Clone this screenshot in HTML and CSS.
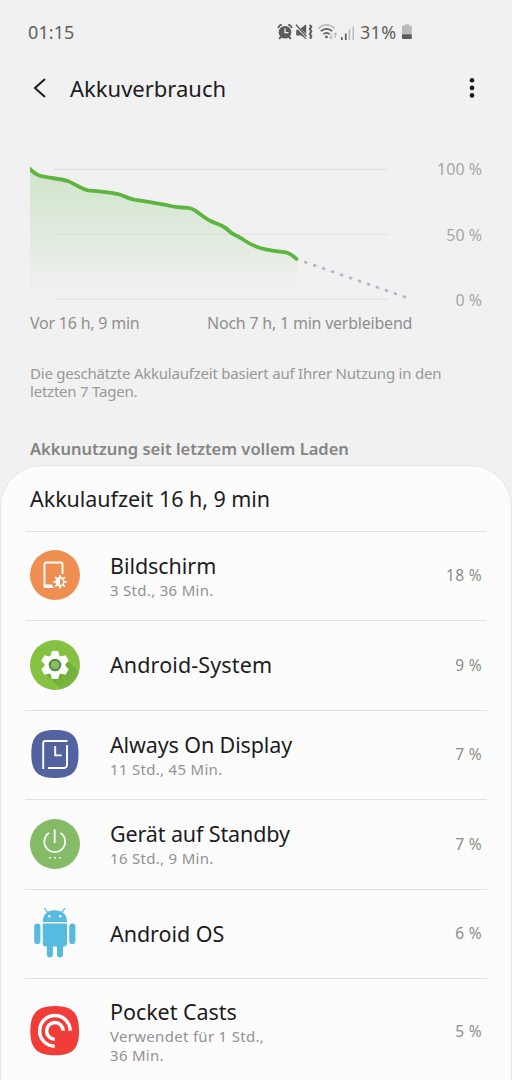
FILE: index.html
```html
<!DOCTYPE html>
<html lang="de">
<head>
<meta charset="utf-8">
<title>Akkuverbrauch</title>
<link rel="stylesheet" href="styles.css">
</head>
<body>
<div class="screen">
  <header class="status">
    <span class="clock">01:15</span>
    <svg class="status-icons" width="80" height="20" viewBox="0 0 80 20">
      <g fill="none" stroke="#5c5c5c">
        <circle cx="8" cy="10.300" r="6.300" fill="#5c5c5c" stroke="none"/>
        <path d="M1.200 6.200Q1.800 3.200 4.800 2.600M11.200 2.600Q14.200 3.200 14.800 6.200" stroke-width="1.700"/>
        <path d="M4.200 14.300L2.200 17M11.800 14.300l2 2.700" stroke-width="2"/>
        <path d="M8 6.500v4.200h3.500" stroke="#f1f1f1" stroke-width="1.300"/>
        <path d="M19.200 7.800h2l8 8.400v1.200l-5-4h-5zM23.500 6.500l5.700-4.300v10z" fill="#5c5c5c" stroke="none"/>
        <path d="M19 2.700L29.500 14.500" stroke-width="1.400"/>
        <path d="M32.800 2.800l1.500 1.900-1.500 2.400 1.500 2.400-1.500 2.400 1.500 2.400-1.200 2.400" stroke-width="2"/>
        <path d="M41.300 6.600Q49.500-.8 57.700 6.600" stroke="#bbb" stroke-width="1.500"/>
        <path d="M43.800 9.200q5.700-4.700 11.400 0M46.400 12.200q3.100-2.800 6.200 0" stroke-width="1.700"/>
        <circle cx="49.500" cy="14.900" r="1.300" fill="#5c5c5c" stroke="none"/>
        <path d="M54 12v5M52.400 15L54 16.800l1.600-1.800M58.300 16v-5M56.700 12.700l1.600-1.900 1.600 1.900" stroke="#b0b0b0" stroke-width="1"/>
      </g>
      <g fill="#5c5c5c">
        <path d="M64 15h1.600v3H64zM67.900 11.500h1.700V18h-1.700z"/>
        <path d="M71.600 7.500h1.600V18h-1.600zM75.500 4.300h1.500V18h-1.500z" fill="#bbb"/>
      </g>
    </svg>
    <span class="level">31%</span>
    <svg class="battery" width="12" height="20" viewBox="0 0 12 20">
      <path d="M1 3.700h2.600V2.200h4.600v1.500h2.600v8.500H1z" fill="#bababa"/>
      <path d="M1 12.200h9.800v4q0 .8-.8.800H1.800Q1 17 1 16.200z" fill="#5c5c5c"/>
    </svg>
  </header>

  <div class="titlebar">
    <svg class="back" width="16" height="22" viewBox="0 0 16 22"><path d="M13 2L3 11l10 9" fill="none" stroke="#1c1c1c" stroke-width="2"/></svg>
    <h1 class="title">Akkuverbrauch</h1>
    <svg class="more" width="8" height="22" viewBox="0 0 8 22" fill="#1a1a1a"><circle cx="4" cy="3.200" r="2.300"/><circle cx="4" cy="10.900" r="2.300"/><circle cx="4" cy="18.400" r="2.300"/></svg>
  </div>

  <section class="chart">
    <svg class="plot" width="390" height="146" viewBox="30 160 390 146">
      <defs>
        <linearGradient id="fade" x1="0" y1="168" x2="0" y2="299" gradientUnits="userSpaceOnUse">
          <stop offset="0" stop-color="#60b846" stop-opacity=".23"/>
          <stop offset="1" stop-color="#60b846" stop-opacity="0"/>
        </linearGradient>
      </defs>
      <path d="M54 169.500H388M54 234.300H388M54 299H388" stroke="#e5e5e5" stroke-width="1.300"/>
      <path d="M30 169Q34 173.500 39 175.500C48 178 59 178.500 67 180.800C74 183 80 188.500 88 190.300C99 191.500 113 192.500 121 195C126 196.500 126 198 134 199.700C149 202 159 203.500 173 206.500C181 208 186 207 191 208.500C198 211 203 218 211 221.300C216 223.500 220 224 224 227C229 230 229 232.500 236 235.500C241 237.500 248 243.500 256 246.500C267 251 279 251.500 286 252.400Q291 253.500 297 259.500V299H30Z" fill="url(#fade)"/>
      <path d="M29.500 168.500Q34 173.500 39 175.500C48 178 59 178.500 67 180.800C74 183 80 188.500 88 190.300C99 191.500 113 192.500 121 195C126 196.500 126 198 134 199.700C149 202 159 203.500 173 206.500C181 208 186 207 191 208.500C198 211 203 218 211 221.300C216 223.500 220 224 224 227C229 230 229 232.500 236 235.500C241 237.500 248 243.500 256 246.500C267 251 279 251.500 286 252.400Q291 253.500 296.500 259" fill="none" stroke="#5cb53f" stroke-width="3.800" stroke-linecap="round" stroke-linejoin="round"/>
      <path d="M305.300 262.200L405 297" stroke="#b2b6c4" stroke-width="2.800" stroke-linecap="round" stroke-dasharray=".9 8.600"/>
    </svg>
    <div class="axis"><span>100 %</span><span>50 %</span><span>0 %</span></div>
  </section>
  <div class="range"><span class="range-start">Vor 16 h, 9 min</span><span>Noch 7 h, 1 min verbleibend</span></div>
  <p class="note">Die geschätzte Akkulaufzeit basiert auf Ihrer Nutzung in den<br>letzten 7 Tagen.</p>
  <h2 class="section">Akkunutzung seit letztem vollem Laden</h2>

  <main class="card">
    <h3 class="runtime">Akkulaufzeit 16 h, 9 min</h3>
    <ul class="apps">
      <li class="app">
        <svg class="icon" width="50" height="50" viewBox="0 0 50 50">
          <circle cx="25" cy="25" r="25" fill="#ee8e50"/>
          <path d="M32.500 24V14Q32.500 12.500 31 12.500H16Q14.500 12.500 14.500 14V36" fill="none" stroke="#fff" stroke-width="1.800"/>
          <path d="M13.600 34.500h8.200l2 3.500h-8.700q-1.500 0-1.500-1.500z" fill="#fff"/>
          <circle cx="30" cy="31.800" r="3.900" fill="none" stroke="#fff" stroke-width="1.600"/>
          <path d="M30 27.500a4.300 4.300 0 0 0 0 8.600z" fill="#fff"/>
          <path d="M30 27.500v-2.400M30 36v2.500M25.700 31.800h-2.400M34.300 31.800h2.400M27 28.800l-1.800-1.800M33 28.800l1.800-1.800M27 34.800l-1.800 1.800M33 34.800l1.800 1.800" stroke="#fff" stroke-width="1.700"/>
        </svg>
        <div class="text"><div class="name">Bildschirm</div><div class="detail">3 Std., 36 Min.</div></div>
        <span class="share">18 %</span>
      </li>
      <li class="app">
        <svg class="icon" width="50" height="50" viewBox="0 0 50 50">
          <defs>
            <clipPath id="disc"><circle cx="25" cy="25" r="25"/></clipPath>
            <linearGradient id="shade" x1="0" y1="0" x2="1" y2="1"><stop offset=".3" stop-color="#5d9632"/><stop offset="1" stop-color="#7db940"/></linearGradient>
          </defs>
          <circle cx="25" cy="25" r="25" fill="#86c142"/>
          <path d="M13 31L33 51H50V33L38 21z" fill="url(#shade)" opacity=".55" clip-path="url(#disc)"/>
          <g fill="#fff">
            <circle cx="25" cy="25" r="10.400"/>
            <path d="M20.500 16l1.300-5h6.400l1.300 5v18l-1.300 5h-6.400l-1.300-5z"/>
            <path d="M20.500 16l1.300-5h6.400l1.300 5v18l-1.300 5h-6.400l-1.300-5z" transform="rotate(60 25 25)"/>
            <path d="M20.500 16l1.300-5h6.400l1.300 5v18l-1.300 5h-6.400l-1.300-5z" transform="rotate(120 25 25)"/>
          </g>
          <circle cx="25" cy="25" r="5.200" fill="#8abb68" stroke="#58923d" stroke-width="2.200"/>
        </svg>
        <div class="text"><div class="name name-wide">Android-System</div></div>
        <span class="share">9 %</span>
      </li>
      <li class="app">
        <svg class="icon" width="50" height="50" viewBox="0 0 50 50">
          <path d="M25 1C42 1 48.500 7 48.500 25S42 49 25 49 1.300 43 1.300 25 8 1 25 1Z" fill="#52639f"/>
          <g fill="none" stroke="#fff" stroke-width="1.900">
            <path d="M13.200 40V14.200Q13.200 12 15.400 12H37.500"/>
            <path d="M37 16V35.500Q37 39 33.500 39H18"/>
            <path d="M25.200 17v9.400h6.500"/>
          </g>
        </svg>
        <div class="text"><div class="name name-tight">Always On Display</div><div class="detail">11 Std., 45 Min.</div></div>
        <span class="share">7 %</span>
      </li>
      <li class="app">
        <svg class="icon" width="50" height="50" viewBox="0 0 50 50">
          <circle cx="25" cy="25" r="25" fill="#85bb66"/>
          <path d="M24.700 10.500V24M19 14a10.400 10.400 0 1 0 11.500 0" fill="none" stroke="#fff" stroke-width="1.800"/>
          <path d="M19 37.900h1.700v1.700H19zM24.200 37.900h1.700v1.700h-1.700zM29.300 37.900H31v1.700h-1.700z" fill="#fff"/>
        </svg>
        <div class="text"><div class="name name-tight">Gerät auf Standby</div><div class="detail">16 Std., 9 Min.</div></div>
        <span class="share">7 %</span>
      </li>
      <li class="app">
        <svg class="icon" width="50" height="50" viewBox="0 0 50 50">
          <g fill="#56bbdf">
            <path d="M12.800 14C12.800 6 17.500 2.200 24.700 2.200S37 6 37 14z"/>
            <path d="M17.200 4L14.700.2M32.300 4L34.800.2" stroke="#56bbdf" stroke-width="1.300" stroke-linecap="round"/>
            <path d="M12.800 15.500H37V35.500Q37 38.500 34 38.500H15.800Q12.800 38.500 12.800 35.500z"/>
            <rect x="4.200" y="15.500" width="6.200" height="20.500" rx="3.100"/>
            <rect x="39.200" y="15.500" width="6.200" height="20.500" rx="3.100"/>
            <rect x="16.900" y="33" width="6" height="16.500" rx="3"/>
            <rect x="27" y="33" width="6" height="16.500" rx="3"/>
          </g>
          <circle cx="19.300" cy="8.300" r="1.200" fill="#fff"/><circle cx="30.300" cy="8.300" r="1.200" fill="#fff"/>
        </svg>
        <div class="text"><div class="name">Android OS</div></div>
        <span class="share">6 %</span>
      </li>
      <li class="app app-tall">
        <svg class="icon" width="50" height="50" viewBox="0 0 50 50">
          <path d="M25 0C42.500 0 49 7 49 25S42.500 49.300 25 49.300.3 43 .3 25 7.500 0 25 0Z" fill="#f23c37"/>
          <path d="M24.700 40.200A15.300 15.300 0 1 1 40.200 24.800M24.700 33.200A8.300 8.300 0 1 1 33.200 24.800" fill="none" stroke="#fff" stroke-width="3.500"/>
        </svg>
        <div class="text"><div class="name">Pocket Casts</div><div class="detail">Verwendet für 1 Std.,<br>36 Min.</div></div>
        <span class="share">5 %</span>
      </li>
    </ul>
  </main>
</div>
</body>
</html>
```

FILE: styles.css
```css
* { box-sizing: border-box; margin: 0; padding: 0; }

body {
  background: #f1f1f1;
  color: #1c1c1c;
  font-family: "Noto Sans", sans-serif;
}

svg { display: block; flex: none; }

.screen { width: 512px; height: 1080px; overflow: hidden; }

.status {
  display: flex;
  align-items: center;
  height: 64px;
  padding-left: 28px;
  color: #606060;
  font-size: 18px;
}
.clock { width: 249px; letter-spacing: 0.1px; }
.level { width: 43.500px; padding-left: 3px; letter-spacing: 0.300px; }

.titlebar {
  display: flex;
  align-items: center;
  height: 48px;
  padding: 0 36px 0 32px;
}
.title {
  flex: 1;
  padding-left: 22px;
  font-size: 22px;
  font-weight: 400;
  line-height: 30px;
}

.chart {
  display: flex;
  justify-content: space-between;
  margin-top: 48px;
  padding: 0 30px;
  height: 152px;
}
.axis {
  display: flex;
  flex-direction: column;
  justify-content: space-between;
  align-items: flex-end;
  height: 151px;
  margin-top: -0.600px;
  color: #a6a6a6;
  font-size: 16px;
  line-height: 20px;
}

.range {
  display: flex;
  padding-left: 30px;
  color: #8f8f8f;
  font-size: 16px;
  line-height: 22px;
  letter-spacing: -0.220px;
}
.range-start { width: 177px; }

.note {
  margin: 30px 30px 0;
  color: #989898;
  font-size: 15px;
  line-height: 18px;
  letter-spacing: -0.220px;
}
.section {
  margin: 37px 30px 0;
  color: #848484;
  font-size: 16.500px;
  font-weight: 600;
  line-height: 24px;
}

.card {
  height: 640px;
  margin-top: 4px;
  padding: 0 24px;
  background: #fcfcfc;
  border: 1px solid #e6e6e6;
  border-radius: 42px 42px 0 0;
}
.runtime {
  height: 64.500px;
  padding: 16px 5px 0;
  font-size: 21.500px;
  font-weight: 400;
  line-height: 34px;
  letter-spacing: -0.040px;
}

.apps { list-style: none; }
.app {
  display: flex;
  align-items: center;
  height: 89.500px;
  padding: 0 5px 1px 4.500px;
  border-top: 1.500px solid #e0e0e0;
}
.app-tall { height: 106px; }
.text { flex: 1; padding-left: 30.500px; }
.name { font-size: 21.500px; line-height: 29px; letter-spacing: -0.050px; }
.name-wide { letter-spacing: 0.120px; }
.name-tight { letter-spacing: -0.120px; }
.detail {
  padding-top: 1px;
  color: #929292;
  font-size: 15px;
  line-height: 19px;
  letter-spacing: 0.300px;
}
.share { color: #8c8c8c; font-size: 15.500px; letter-spacing: 0.350px; }
```
